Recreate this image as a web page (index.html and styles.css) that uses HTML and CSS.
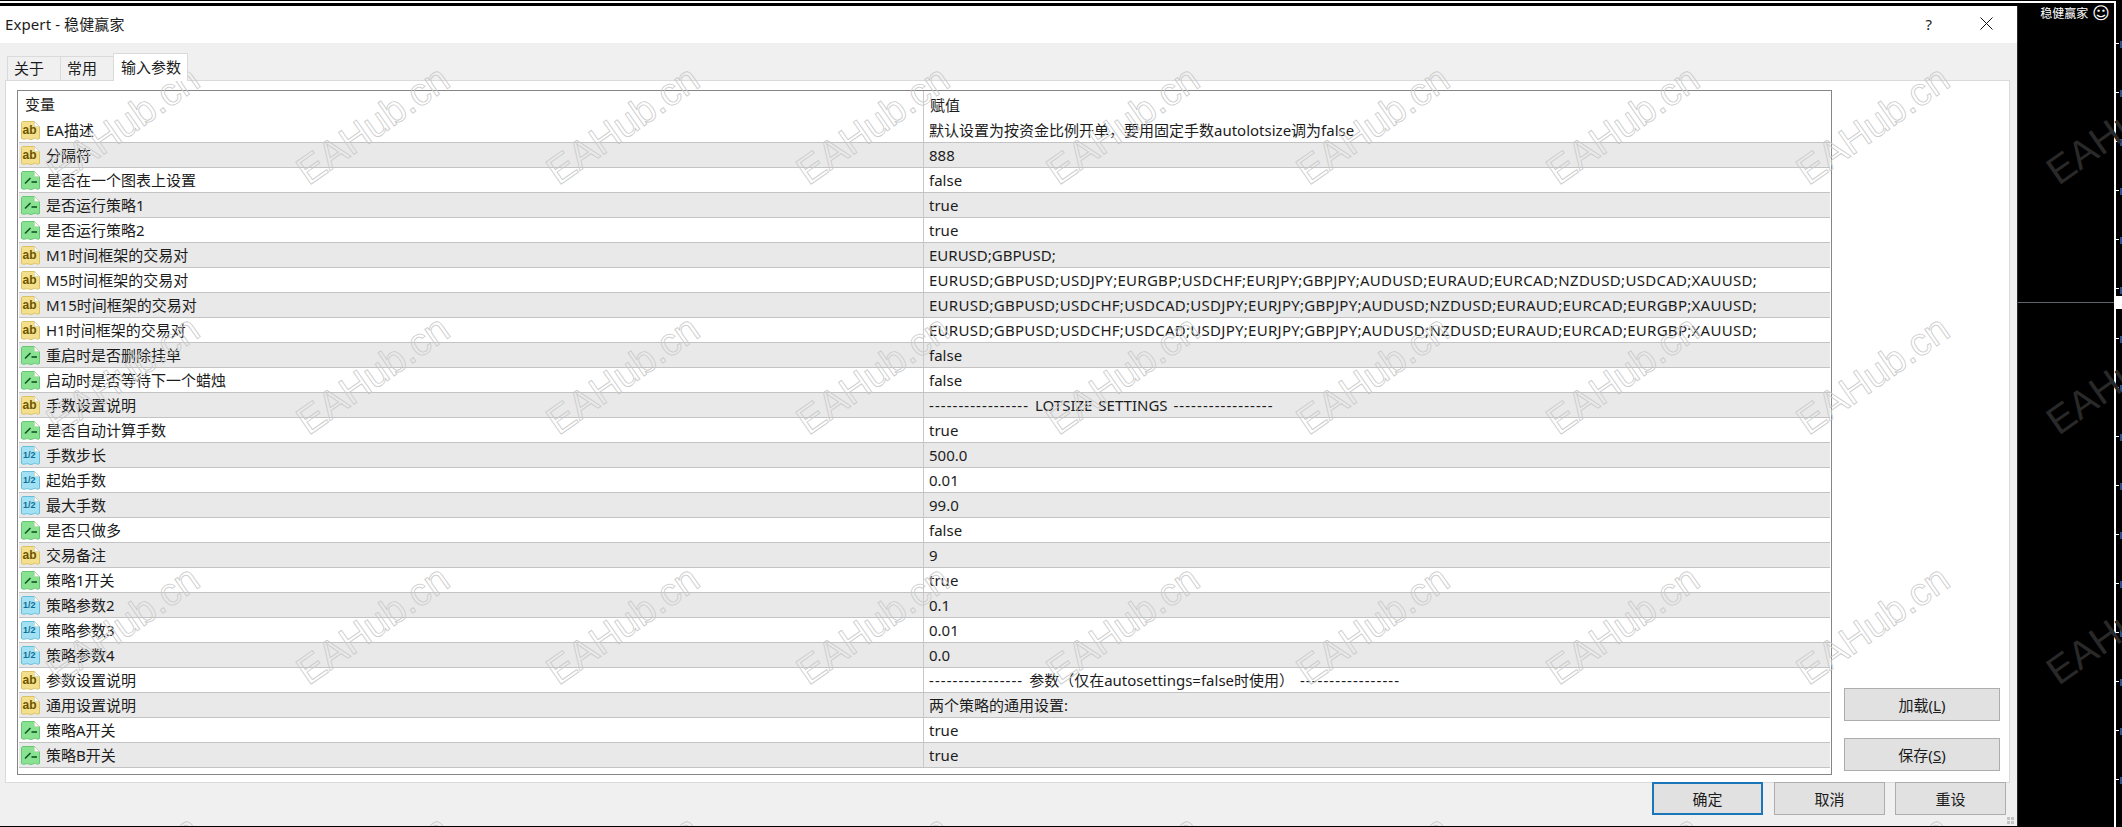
FILE: index.html
```html
<!DOCTYPE html>
<html lang="zh-CN">
<head>
<meta charset="utf-8">
<title>Expert - 稳健赢家</title>
<link rel="stylesheet" href="styles.css">
</head>
<body>
<svg class="defs" width="0" height="0" aria-hidden="true">
  <defs>
    <symbol id="i-ab" viewBox="0 0 21 21">
      <path class="doc doc-y" d="M2.500 1.500H14.500L19.500 6.500V18.500C17.500 20.500 16 17.500 14 18.500C12 19.500 10.500 20 8.500 18.800C6.500 17.800 4 20.500 1.500 18.500V2.500Z"/>
      <path class="fold" d="M14.500 1.500V6.500H19.500Z"/>
      <text class="ab" x="2.500" y="14">ab</text>
    </symbol>
    <symbol id="i-bool" viewBox="0 0 21 21">
      <path class="doc doc-g" d="M2.500 1.500H14.500L19.500 6.500V18.500C17.500 20.500 16 17.500 14 18.500C12 19.500 10.500 20 8.500 18.800C6.500 17.800 4 20.500 1.500 18.500V2.500Z"/>
      <path class="fold" d="M14.500 1.500V6.500H19.500Z"/>
      <path class="line" d="M5 13.500L10.500 8"/>
      <path class="line" d="M11.500 12H17"/>
    </symbol>
    <symbol id="i-num" viewBox="0 0 21 21">
      <path class="doc doc-b" d="M2.500 1.500H14.500L19.500 6.500V18.500C17.500 20.500 16 17.500 14 18.500C12 19.500 10.500 20 8.500 18.800C6.500 17.800 4 20.500 1.500 18.500V2.500Z"/>
      <path class="fold" d="M14.500 1.500V6.500H19.500Z"/>
      <text class="half" x="3" y="13">1/2</text>
    </symbol>
  </defs>
</svg>
<div class="page">
  <div class="left">
    <div class="topline"></div>
    <div class="main">
      <section class="dialog">
        <header class="titlebar">
          <span class="title">Expert - 稳健赢家</span>
          <span class="title-actions">
            <span class="help">?</span>
            <svg class="close" width="13" height="13" viewBox="0 0 13 13"><path d="M0.500 0.500L12.500 12.500M12.500 0.500L0.500 12.500"/></svg>
          </span>
        </header>
        <nav class="tabs">
          <span class="tab">关于</span>
          <span class="tab">常用</span>
          <span class="tab tab-active">输入参数</span>
        </nav>
        <div class="panel">
          <div class="table">
            <div class="row row-head"><span class="name">变量</span><span class="value">赋值</span></div>
            <div class="row"><span class="name"><svg class="icon"><use href="#i-ab"/></svg>EA描述</span><span class="value">默认设置为按资金比例开单，要用固定手数autolotsize调为false</span></div>
            <div class="row alt"><span class="name"><svg class="icon"><use href="#i-ab"/></svg>分隔符</span><span class="value">888</span></div>
            <div class="row"><span class="name"><svg class="icon"><use href="#i-bool"/></svg>是否在一个图表上设置</span><span class="value">false</span></div>
            <div class="row alt"><span class="name"><svg class="icon"><use href="#i-bool"/></svg>是否运行策略1</span><span class="value">true</span></div>
            <div class="row"><span class="name"><svg class="icon"><use href="#i-bool"/></svg>是否运行策略2</span><span class="value">true</span></div>
            <div class="row alt"><span class="name"><svg class="icon"><use href="#i-ab"/></svg>M1时间框架的交易对</span><span class="value">EURUSD;GBPUSD;</span></div>
            <div class="row"><span class="name"><svg class="icon"><use href="#i-ab"/></svg>M5时间框架的交易对</span><span class="value syms">EURUSD;GBPUSD;USDJPY;EURGBP;USDCHF;EURJPY;GBPJPY;AUDUSD;EURAUD;EURCAD;NZDUSD;USDCAD;XAUUSD;</span></div>
            <div class="row alt"><span class="name"><svg class="icon"><use href="#i-ab"/></svg>M15时间框架的交易对</span><span class="value syms">EURUSD;GBPUSD;USDCHF;USDCAD;USDJPY;EURJPY;GBPJPY;AUDUSD;NZDUSD;EURAUD;EURCAD;EURGBP;XAUUSD;</span></div>
            <div class="row"><span class="name"><svg class="icon"><use href="#i-ab"/></svg>H1时间框架的交易对</span><span class="value syms">EURUSD;GBPUSD;USDCHF;USDCAD;USDJPY;EURJPY;GBPJPY;AUDUSD;NZDUSD;EURAUD;EURCAD;EURGBP;XAUUSD;</span></div>
            <div class="row alt"><span class="name"><svg class="icon"><use href="#i-bool"/></svg>重启时是否删除挂单</span><span class="value">false</span></div>
            <div class="row"><span class="name"><svg class="icon"><use href="#i-bool"/></svg>启动时是否等待下一个蜡烛</span><span class="value">false</span></div>
            <div class="row alt"><span class="name"><svg class="icon"><use href="#i-ab"/></svg>手数设置说明</span><span class="value sep"><span class="dash">-----------------</span> LOTSIZE SETTINGS <span class="dash">-----------------</span></span></div>
            <div class="row"><span class="name"><svg class="icon"><use href="#i-bool"/></svg>是否自动计算手数</span><span class="value">true</span></div>
            <div class="row alt"><span class="name"><svg class="icon"><use href="#i-num"/></svg>手数步长</span><span class="value">500.0</span></div>
            <div class="row"><span class="name"><svg class="icon"><use href="#i-num"/></svg>起始手数</span><span class="value">0.01</span></div>
            <div class="row alt"><span class="name"><svg class="icon"><use href="#i-num"/></svg>最大手数</span><span class="value">99.0</span></div>
            <div class="row"><span class="name"><svg class="icon"><use href="#i-bool"/></svg>是否只做多</span><span class="value">false</span></div>
            <div class="row alt"><span class="name"><svg class="icon"><use href="#i-ab"/></svg>交易备注</span><span class="value">9</span></div>
            <div class="row"><span class="name"><svg class="icon"><use href="#i-bool"/></svg>策略1开关</span><span class="value">true</span></div>
            <div class="row alt"><span class="name"><svg class="icon"><use href="#i-num"/></svg>策略参数2</span><span class="value">0.1</span></div>
            <div class="row"><span class="name"><svg class="icon"><use href="#i-num"/></svg>策略参数3</span><span class="value">0.01</span></div>
            <div class="row alt"><span class="name"><svg class="icon"><use href="#i-num"/></svg>策略参数4</span><span class="value">0.0</span></div>
            <div class="row"><span class="name"><svg class="icon"><use href="#i-ab"/></svg>参数设置说明</span><span class="value sep"><span class="dash">----------------</span> 参数（仅在autosettings=false时使用） <span class="dash">-----------------</span></span></div>
            <div class="row alt"><span class="name"><svg class="icon"><use href="#i-ab"/></svg>通用设置说明</span><span class="value">两个策略的通用设置:</span></div>
            <div class="row"><span class="name"><svg class="icon"><use href="#i-bool"/></svg>策略A开关</span><span class="value">true</span></div>
            <div class="row alt"><span class="name"><svg class="icon"><use href="#i-bool"/></svg>策略B开关</span><span class="value">true</span></div>
          </div>
          <div class="side-buttons">
            <button class="btn btn-side">加载(<u>L</u>)</button>
            <button class="btn btn-side">保存(<u>S</u>)</button>
          </div>
        </div>
        <footer class="footer">
          <button class="btn btn-foot btn-default">确定</button>
          <button class="btn btn-foot">取消</button>
          <button class="btn btn-foot">重设</button>
        </footer>
        <div class="grip"><i></i><i></i><i></i><i></i></div>
        <div class="wm-layer" aria-hidden="true">
          <span>EAHub.cn</span><span>EAHub.cn</span><span>EAHub.cn</span><span>EAHub.cn</span><span>EAHub.cn</span><span>EAHub.cn</span><span>EAHub.cn</span><span>EAHub.cn</span>
          <span>EAHub.cn</span><span>EAHub.cn</span><span>EAHub.cn</span><span>EAHub.cn</span><span>EAHub.cn</span><span>EAHub.cn</span><span>EAHub.cn</span><span>EAHub.cn</span>
          <span>EAHub.cn</span><span>EAHub.cn</span><span>EAHub.cn</span><span>EAHub.cn</span><span>EAHub.cn</span><span>EAHub.cn</span><span>EAHub.cn</span><span>EAHub.cn</span>
          <span>EAHub.cn</span><span>EAHub.cn</span><span>EAHub.cn</span><span>EAHub.cn</span><span>EAHub.cn</span><span>EAHub.cn</span><span>EAHub.cn</span><span>EAHub.cn</span>
        </div>
      </section>
      <aside class="chart">
        <div class="ea-label"><span>稳健赢家</span><span class="smile">☺</span></div>
        <div class="price-line"></div>
      </aside>
    </div>
  </div>
  <div class="axis"><div class="axis-label"></div></div>
  <div class="wm-dark" aria-hidden="true">
    <span>EAHub.cn</span><span>EAHub.cn</span><span>EAHub.cn</span>
  </div>
</div>
</body>
</html>
```
FILE: styles.css
```css
* { box-sizing: border-box; }
html, body { margin: 0; padding: 0; background: #000; }
body { font-family: "Noto Sans", "Noto Sans CJK SC", sans-serif; font-size: 15px; color: #1c1c1c; }
.defs { position: absolute; }
.page { position: relative; display: flex; width: 2122px; height: 827px; overflow: hidden; background: #000; }
.left { width: 2114px; display: flex; flex-direction: column; }
.topline { height: 2px; margin: 1px 0 3px; background: #fff; flex: none; }
.main { display: flex; flex: none; height: 820px; }

.dialog { position: relative; width: 2017px; height: 820px; background: #f0f0f0; overflow: hidden; display: flex; flex-direction: column; flex: none; }
.titlebar { height: 37px; flex: none; background: #fff; display: flex; align-items: center; justify-content: space-between; padding: 0 24px 2px 5px; }
.title { font-size: 15px; line-height: 22px; letter-spacing: 0.100px; }
.title-actions { display: flex; align-items: center; gap: 48px; }
.help { font-size: 15px; line-height: 20px; }
.close { display: block; fill: none; stroke: #111; stroke-width: 1; }

.tabs { height: 37px; flex: none; padding: 10px 0 0 7px; display: flex; align-items: flex-end; }
.tab { height: 24px; width: 53px; padding-left: 6px; line-height: 22px; background: #f0f0f0; border: 1px solid #dadada; border-bottom: 0; border-right: 0; }
.tab-active { position: relative; z-index: 1; height: 28px; width: 75px; margin-bottom: -1px; padding-left: 7px; line-height: 26px; background: #fff; border-right: 1px solid #dadada; }

.panel { height: 703px; flex: none; margin: 0 7px 0 5px; padding: 9px 0 7px 11px; background: #fff; border: 1px solid #dadada; display: flex; gap: 12px; }
.table { width: 1815px; height: 685px; flex: none; border: 1px solid #858585; padding: 0 1px 0 1px; }
.row { display: flex; height: 25px; line-height: 24px; border-bottom: 1px solid #c3c3c3; white-space: nowrap; }
.row.alt { background: #e9e9e9; }
.row-head { height: 27px; line-height: 29px; border-bottom: 0; }
.name { width: 904px; flex: none; display: flex; align-items: center; gap: 5px; padding-left: 1px; }
.row-head .name { padding-left: 6px; }
.value { flex: 1; padding-left: 5px; border-left: 1px solid #c9c9c9; }
.row-head .value { padding-left: 6px; }
.syms { letter-spacing: 0.280px; }
.sep { word-spacing: 2px; }
.dash { letter-spacing: 1.060px; }

.icon { width: 21px; height: 21px; flex: none; }
.doc { stroke-width: 1; }
.doc-y { fill: #f4df8c; stroke: #dcc264; }
.doc-g { fill: #88e292; stroke: #66c672; }
.doc-b { fill: #a2e0f3; stroke: #67bedb; }
.fold { fill: #fbfbf4; stroke: #c9c9b8; stroke-width: 0.500; }
.ab { font: 700 12px "Liberation Sans", sans-serif; fill: #6b5500; }
.half { font: 700 9px "Liberation Sans", sans-serif; fill: #0d6f95; }
.line { fill: none; stroke: #0f5520; stroke-width: 1.600; }

.side-buttons { width: 156px; flex: none; display: flex; flex-direction: column; justify-content: flex-end; gap: 17px; padding-bottom: 4px; }
.btn { font: inherit; color: #1c1c1c; background: #e1e1e1; border: 1px solid #adadad; padding: 0; height: 33px; }
.btn-side { width: 156px; }
.footer { flex: none; height: 33px; margin-top: -1px; padding-right: 11px; display: flex; justify-content: flex-end; gap: 10px; position: relative; }
.btn-foot { width: 111px; }
.btn-default { border: 2px solid #1a76b8; margin-right: 1px; }
.grip { position: absolute; right: 3px; bottom: 2px; width: 7px; height: 7px; display: grid; grid-template-columns: 3px 3px; gap: 1px; }
.grip i { background: #c4c4c4; }

.wm-layer { position: absolute; top: -6px; left: -2px; display: grid; grid-template-columns: repeat(8, 250px); grid-auto-rows: 250px; pointer-events: none; }
.wm-layer span, .wm-dark span { display: flex; align-items: center; justify-content: center; font-family: "Liberation Sans", sans-serif; font-size: 39px; white-space: nowrap; transform: rotate(-35deg); }
.wm-layer span { color: transparent; -webkit-text-stroke: 0.800px #c9c9c9; }

.chart { position: relative; flex: 1; border-left: 1px solid #2a2a2a; }
.ea-label { display: flex; align-items: center; justify-content: flex-end; gap: 4px; height: 15px; padding-right: 4px; color: #fff; font-size: 12px; line-height: 15px; }
.smile { font-family: "DejaVu Sans", sans-serif; font-size: 17px; }
.price-line { position: absolute; left: 0; right: 0; top: 296px; height: 1px; background: #5d6670; }

.axis { position: relative; flex: 1; margin-top: 1px; border-left: 2px solid #fff;
  background-image:
    repeating-linear-gradient(to bottom, transparent 0 42px, #fff 42px 43px, transparent 43px 49.100px),
    repeating-linear-gradient(to bottom, transparent 0 40px, #2c4f86 40px 47px, transparent 47px 49.100px);
  background-size: 3px 100%, 2px 100%;
  background-repeat: no-repeat;
  background-position: 0 0, 4px 0; }
.axis-label { position: absolute; left: 0; right: 0; top: 295px; height: 13px; background: #fff; }
.wm-dark { position: absolute; left: 2017px; right: 0; top: 0; bottom: 0; overflow: hidden; pointer-events: none; }
.wm-dark span { width: 250px; height: 250px; margin-left: -19px; color: #292929; }
```
